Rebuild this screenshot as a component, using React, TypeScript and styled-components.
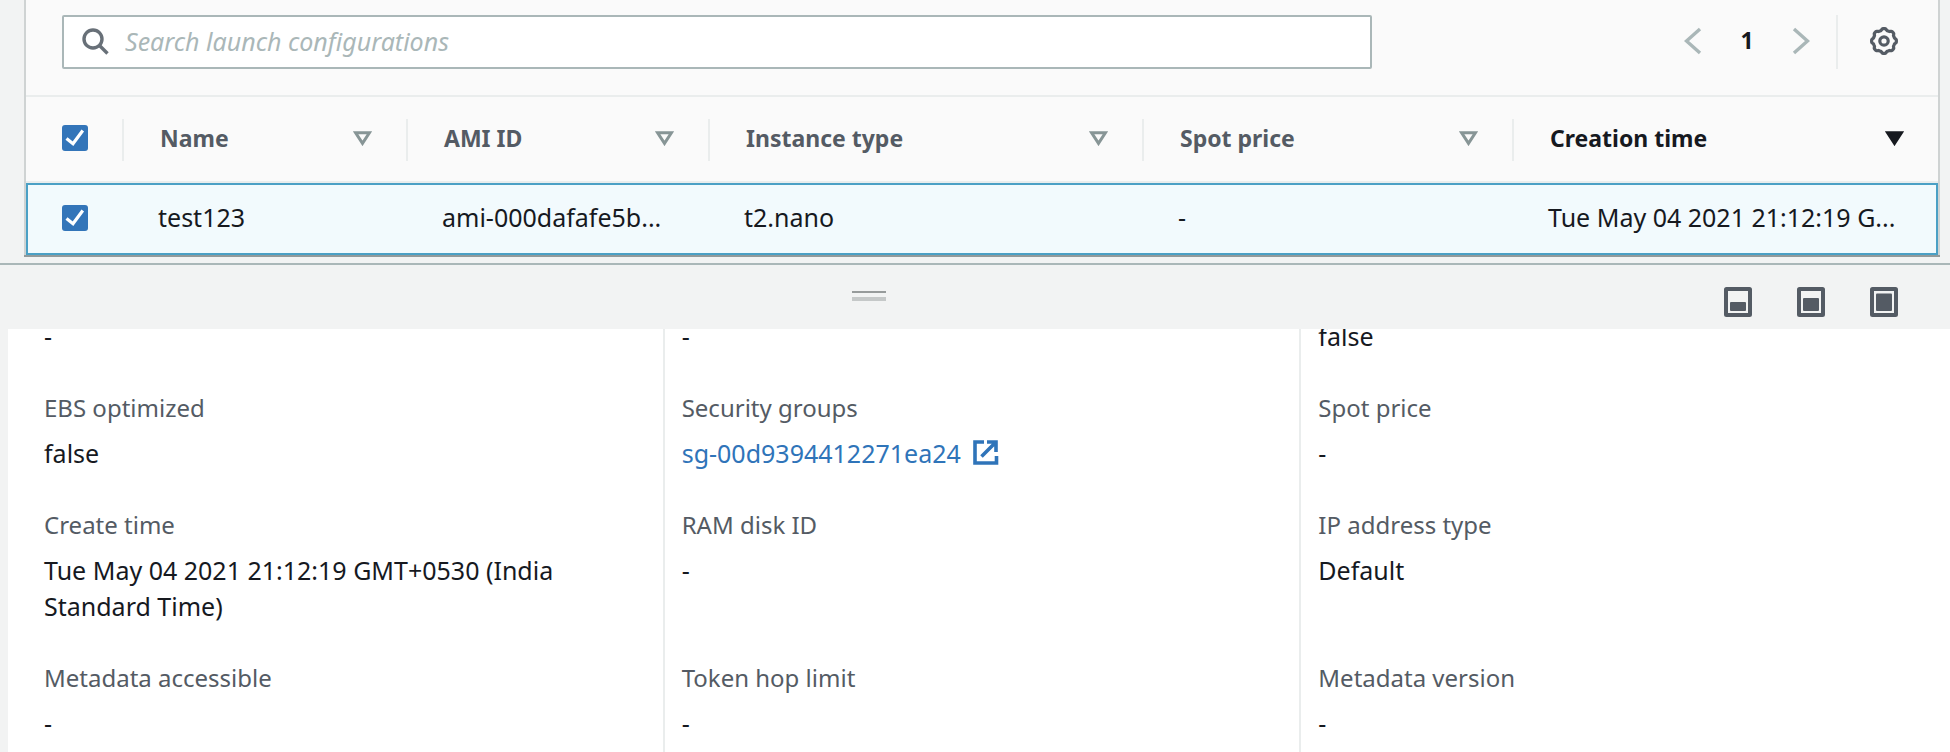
import React from 'react';
import styled, { createGlobalStyle, css } from 'styled-components';

const GlobalStyle = createGlobalStyle`
  *, *::before, *::after { box-sizing: border-box; }
  html, body, #root { height: 100%; }
  body {
    margin: 0;
    overflow: hidden;
    background: #f2f3f3;
    color: #16191f;
    font-family: 'Noto Sans', 'Open Sans', sans-serif;
    font-size: 25px;
    line-height: 36px;
  }
  button {
    margin: 0;
    padding: 0;
    border: 0;
    background: none;
    color: inherit;
    font: inherit;
    cursor: pointer;
  }
  svg { display: block; flex: none; }
`;

const Page = styled.div`
  display: flex;
  flex-direction: column;
  height: 100%;
`;

const Panel = styled.section`
  flex: none;
  margin: 0 10px 8px 24px;
  border: solid #cfd3d3;
  border-width: 0 2px;
  background: #fafafa;
  box-shadow: 0 2px 0 #929a9b;
`;

const Toolbar = styled.div`
  display: flex;
  align-items: center;
  justify-content: space-between;
  gap: 36px;
  padding: 15px 40px 26px 36px;
  border-bottom: 2px solid #eaeded;
`;

const SearchBox = styled.label`
  display: flex;
  flex: 1;
  align-items: center;
  gap: 16px;
  max-width: 1310px;
  height: 54px;
  padding: 0 18px 2px;
  border: 2px solid #aab7b8;
  border-radius: 2px;
  background: #fff;
  color: #687078;
`;

const SearchInput = styled.input`
  flex: 1;
  min-width: 0;
  padding: 0;
  border: 0;
  outline: 0;
  background: none;
  color: #16191f;
  font: inherit;
  &::placeholder {
    color: #aab7b8;
    font-style: italic;
    opacity: 1;
  }
`;

const Pager = styled.nav`
  display: flex;
  align-items: center;
  height: 54px;
`;

const PageArrow = styled.button`
  width: 18px;
  height: 30px;
  padding-bottom: 2px;
  color: #aab7b8;
`;

const PageNumber = styled.button`
  width: 90px;
  padding-bottom: 4px;
  font-size: 23px;
  font-weight: 700;
`;

const SettingsArea = styled.div`
  display: flex;
  align-items: center;
  height: 54px;
  margin-left: 26px;
  padding: 0 0 2px 32px;
  border-left: 2px solid #eaeded;
  color: #545b64;
`;

const Table = styled.table`
  width: 100%;
  border-collapse: separate;
  border-spacing: 0;
  table-layout: fixed;
`;

const Col = styled.col<{ $width?: number }>`
  ${(p) => p.$width && css`width: ${p.$width}px;`}
`;

const HeaderCell = styled.th`
  padding: 22px 0 20px;
  border-bottom: 2px solid #eaeded;
  text-align: left;
`;

const HeaderInner = styled.div<{ $last?: boolean }>`
  display: flex;
  align-items: center;
  height: 42px;
  padding: 0 0 4px 36px;
  border-right: ${(p) => (p.$last ? '0' : '2px solid #eaeded')};
`;

const SortButton = styled.button<{ $active?: boolean }>`
  display: flex;
  flex: 1;
  align-items: center;
  justify-content: space-between;
  padding-right: 34px;
  color: ${(p) => (p.$active ? '#16191f' : '#545b64')};
  font-size: 23px;
  font-weight: 700;
  svg { color: ${(p) => (p.$active ? '#16191f' : '#879596')}; }
`;

const Cell = styled.td`
  overflow: hidden;
  height: 72px;
  padding: 0 0 4px 34px;
  border: solid #4ba0c5;
  border-width: 2px 0;
  background: #f2fafd;
  white-space: nowrap;
  &:first-child {
    padding-bottom: 2px;
    border-left-width: 2px;
  }
  &:last-child { border-right-width: 2px; }
`;

const Check = styled.label`
  display: grid;
  width: 26px;
  height: 26px;
  color: #fff;
  > * { grid-area: 1 / 1; }
  svg { pointer-events: none; }
`;

const CheckInput = styled.input`
  width: 26px;
  height: 26px;
  margin: 0;
  border-radius: 3px;
  background: #3375b9;
  appearance: none;
`;

const SplitBar = styled.div`
  display: flex;
  flex: none;
  align-items: center;
  height: 66px;
  padding-right: 52px;
  border-top: 2px solid #aab7b8;
`;

const HandleArea = styled.div`
  display: flex;
  flex: 1;
  justify-content: center;
  padding: 0 0 2px 14px;
`;

const Handle = styled.button`
  width: 34px;
  height: 10px;
  border: solid #c5c8c8;
  border-width: 0 0 4px;
  box-shadow: inset 0 2px 0 #979b9b;
  cursor: row-resize;
`;

const LayoutButtons = styled.div`
  display: flex;
  gap: 45px;
  padding-top: 10px;
  color: #545b64;
`;

const Details = styled.section`
  flex: 1;
  min-height: 0;
  margin-left: 8px;
  padding: 0 14px 0 18px;
  overflow: hidden;
  background: #fff;
`;

/* The pane is scrolled part of the way into the first group. */
const DetailsGrid = styled.div`
  display: grid;
  grid-template-columns: repeat(3, 1fr);
  row-gap: 36px;
  margin-top: -11px;
`;

const DetailsColumn = styled.dl`
  display: grid;
  grid-row: 1 / span 4;
  grid-template-rows: subgrid;
  margin: 0;
  padding: 0 18px 36px;
  & + & {
    padding-left: 17px;
    border-left: 2px solid #eaeded;
  }
`;

const Field = styled.div`
  display: flex;
  flex-direction: column;
  gap: 9px;
`;

const Label = styled.dt`
  color: #545b64;
  font-size: 24px;
`;

const Value = styled.dd`
  margin: 0;
`;

const ExternalLink = styled.a`
  display: inline-flex;
  align-items: center;
  gap: 12px;
  color: #2f74b9;
  text-decoration: none;
`;

const SearchIcon = () => (
  <svg width="27" height="27" viewBox="0 0 27 27" fill="none" stroke="currentColor" strokeWidth="3.4">
    <circle cx="11" cy="11" r="9" />
    <path d="M17.5 17.5 25.5 25.5" />
  </svg>
);

const Chevron = ({ right }: { right?: boolean }) => (
  <svg width="18" height="28" viewBox="0 0 18 28" fill="none" stroke="currentColor" strokeWidth="3.4">
    <path d={right ? 'M2 2 15.5 14 2 26' : 'M16 2 2.5 14 16 26'} />
  </svg>
);

const gearPath = (() => {
  const points: string[] = [];
  for (let i = 0; i < 96; i++) {
    const a = (i / 96) * Math.PI * 2;
    const r = 11.6 + 0.8 * Math.tanh(2.5 * Math.cos(8 * a));
    points.push(`${(14 + r * Math.cos(a)).toFixed(2)} ${(14 + r * Math.sin(a)).toFixed(2)}`);
  }
  return `M${points.join('L')}Z`;
})();

const GearIcon = () => (
  <svg width="28" height="28" viewBox="0 0 28 28" fill="none" stroke="currentColor" strokeWidth="3.2">
    <path d={gearPath} strokeLinejoin="round" />
    <circle cx="14" cy="14" r="4.2" />
  </svg>
);

const SortIcon = ({ filled }: { filled?: boolean }) => (
  <svg width="19" height="15" viewBox="0 0 19 15" fill={filled ? 'currentColor' : 'none'} stroke="currentColor" strokeWidth="3">
    <path d="M2.6 1.8H16.4L9.5 12.4Z" />
  </svg>
);

const CheckIcon = () => (
  <svg width="26" height="26" viewBox="0 0 26 26" fill="none" stroke="currentColor" strokeWidth="3.2">
    <path d="M4.5 13.5 11 18.8 20.8 5.5" />
  </svg>
);

const ExternalIcon = () => (
  <svg width="26" height="26" viewBox="0 0 26 26" fill="none" stroke="currentColor" strokeWidth="3.6">
    <path d="M11 2H2V23H23.5V16" />
    <path d="M14 2H23V12M22.5 2.5 8.5 16.5" />
  </svg>
);

const PaneIcon = ({ top }: { top: number }) => (
  <svg width="28" height="30" viewBox="0 0 28 30">
    <rect x="2" y="2" width="24" height="26" rx="0.5" fill="none" stroke="currentColor" strokeWidth="4" />
    <rect x="6" y={top} width="16" height={24 - top} rx="1" fill="currentColor" />
  </svg>
);

const columns = [
  { title: 'Name', width: 284, value: 'test123' },
  { title: 'AMI ID', width: 302, value: 'ami-000dafafe5b...' },
  { title: 'Instance type', width: 434, value: 't2.nano' },
  { title: 'Spot price', width: 370, value: '-' },
  { title: 'Creation time', value: 'Tue May 04 2021 21:12:19 G...', sorted: true },
];

type Item = { label?: string; value: string; link?: boolean };

const details: Item[][] = [
  [
    { value: '-' },
    { label: 'EBS optimized', value: 'false' },
    { label: 'Create time', value: 'Tue May 04 2021 21:12:19 GMT+0530 (India Standard Time)' },
    { label: 'Metadata accessible', value: '-' },
  ],
  [
    { value: '-' },
    { label: 'Security groups', value: 'sg-00d9394412271ea24', link: true },
    { label: 'RAM disk ID', value: '-' },
    { label: 'Token hop limit', value: '-' },
  ],
  [
    { value: 'false' },
    { label: 'Spot price', value: '-' },
    { label: 'IP address type', value: 'Default' },
    { label: 'Metadata version', value: '-' },
  ],
];

const Checkbox = ({ label }: { label: string }) => (
  <Check>
    <CheckInput type="checkbox" defaultChecked aria-label={label} />
    <CheckIcon />
  </Check>
);

export default function App() {
  return (
    <Page>
      <GlobalStyle />
      <Panel>
        <Toolbar>
          <SearchBox>
            <SearchIcon />
            <SearchInput type="text" placeholder="Search launch configurations" aria-label="Search launch configurations" />
          </SearchBox>
          <Pager aria-label="Pagination">
            <PageArrow aria-label="Previous page"><Chevron /></PageArrow>
            <PageNumber>1</PageNumber>
            <PageArrow aria-label="Next page"><Chevron right /></PageArrow>
            <SettingsArea>
              <button aria-label="Preferences"><GearIcon /></button>
            </SettingsArea>
          </Pager>
        </Toolbar>
        <Table>
          <colgroup>
            <Col $width={98} />
            {columns.map((c) => <Col key={c.title} $width={c.width} />)}
          </colgroup>
          <thead>
            <tr>
              <HeaderCell>
                <HeaderInner><Checkbox label="Select all" /></HeaderInner>
              </HeaderCell>
              {columns.map((c) => (
                <HeaderCell key={c.title} scope="col">
                  <HeaderInner $last={c.sorted}>
                    <SortButton $active={c.sorted}>
                      {c.title}
                      <SortIcon filled={c.sorted} />
                    </SortButton>
                  </HeaderInner>
                </HeaderCell>
              ))}
            </tr>
          </thead>
          <tbody>
            <tr>
              <Cell><Checkbox label="Select test123" /></Cell>
              {columns.map((c) => <Cell key={c.title}>{c.value}</Cell>)}
            </tr>
          </tbody>
        </Table>
      </Panel>
      <SplitBar>
        <HandleArea><Handle aria-label="Resize panel" /></HandleArea>
        <LayoutButtons>
          <button aria-label="Small panel"><PaneIcon top={15} /></button>
          <button aria-label="Medium panel"><PaneIcon top={11} /></button>
          <button aria-label="Full panel"><PaneIcon top={6.5} /></button>
        </LayoutButtons>
      </SplitBar>
      <Details>
        <DetailsGrid>
          {details.map((items, i) => (
            <DetailsColumn key={i}>
              {items.map((item, j) => (
                <Field key={j}>
                  {item.label && <Label>{item.label}</Label>}
                  <Value>
                    {item.link ? (
                      <ExternalLink href="#">
                        {item.value}
                        <ExternalIcon />
                      </ExternalLink>
                    ) : item.value}
                  </Value>
                </Field>
              ))}
            </DetailsColumn>
          ))}
        </DetailsGrid>
      </Details>
    </Page>
  );
}
